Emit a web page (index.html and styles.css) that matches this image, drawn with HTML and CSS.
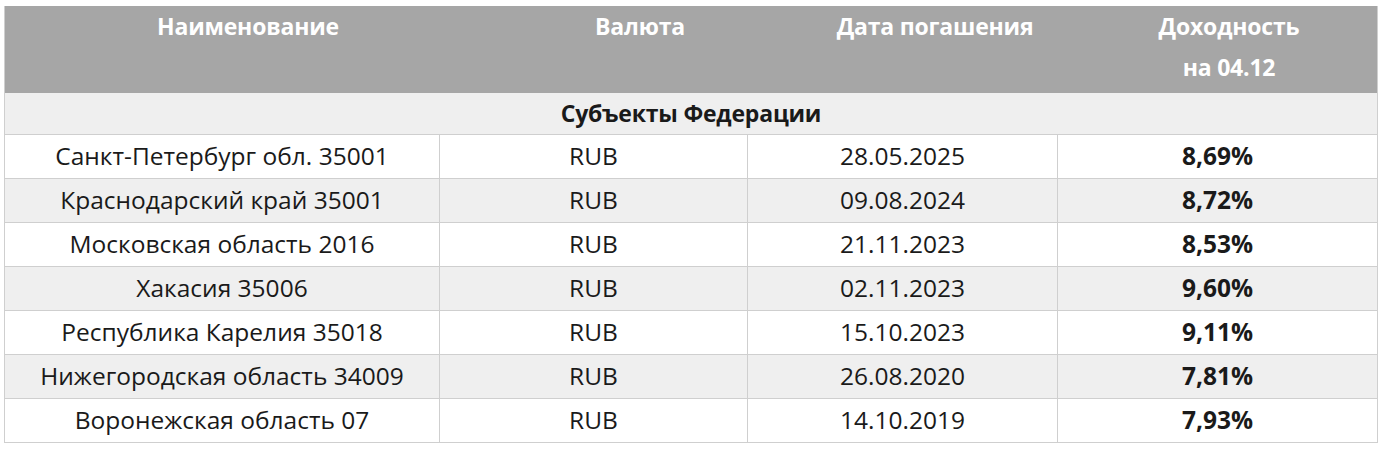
FILE: index.html
```html
<!DOCTYPE html>
<html lang="ru">
<head>
<meta charset="utf-8">
<link rel="stylesheet" href="styles.css">
</head>
<body>
<div class="table">
  <div class="head">
    <div class="hcell">Наименование</div>
    <div class="hcell">Валюта</div>
    <div class="hcell">Дата погашения</div>
    <div class="hcell">Доходность<br>на 04.12</div>
  </div>
  <div class="section">Субъекты Федерации</div>
  <div class="row"><div class="cell">Санкт-Петербург обл. 35001</div><div class="cell">RUB</div><div class="cell">28.05.2025</div><div class="cell b">8,69%</div></div>
  <div class="row alt"><div class="cell">Краснодарский край 35001</div><div class="cell">RUB</div><div class="cell">09.08.2024</div><div class="cell b">8,72%</div></div>
  <div class="row"><div class="cell">Московская область 2016</div><div class="cell">RUB</div><div class="cell">21.11.2023</div><div class="cell b">8,53%</div></div>
  <div class="row alt"><div class="cell">Хакасия 35006</div><div class="cell">RUB</div><div class="cell">02.11.2023</div><div class="cell b">9,60%</div></div>
  <div class="row"><div class="cell">Республика Карелия 35018</div><div class="cell">RUB</div><div class="cell">15.10.2023</div><div class="cell b">9,11%</div></div>
  <div class="row alt"><div class="cell">Нижегородская область 34009</div><div class="cell">RUB</div><div class="cell">26.08.2020</div><div class="cell b">7,81%</div></div>
  <div class="row"><div class="cell">Воронежская область 07</div><div class="cell">RUB</div><div class="cell">14.10.2019</div><div class="cell b">7,93%</div></div>
</div>
</body>
</html>
```
FILE: styles.css
```css
html, body { margin: 0; padding: 0; background: #fff; }
body { padding: 6px 6px 0 4px; font-family: "Open Sans", "Liberation Sans", sans-serif; color: #1a1a1a; }
.table { width: 1372px; border: 1px solid #cfcfcf; border-top: none; }
.head { display: grid; grid-template-columns: 486px 298px 292px 1fr; background: #a6a6a6; height: 87px; }
.hcell { color: #fff; font-weight: 700; font-size: 23px; line-height: 41px; text-align: center; padding-top: 0; letter-spacing: -0.2px; }
.section { height: 41px; line-height: 41px; background: #efefef; text-align: center; font-weight: 700; font-size: 23px; letter-spacing: -0.2px; border-bottom: 1px solid #cfcfcf; }
.row { display: grid; grid-template-columns: 435px 308px 310px 1fr; height: 43px; border-bottom: 1px solid #cfcfcf; }
.row:last-child { border-bottom: none; }
.row.alt { background: #efefef; }
.cell { text-align: center; line-height: 42px; font-size: 24.5px; border-right: 1px solid #cfcfcf; }
.cell:last-child { border-right: none; }
.cell.b { font-weight: 700; }
```
